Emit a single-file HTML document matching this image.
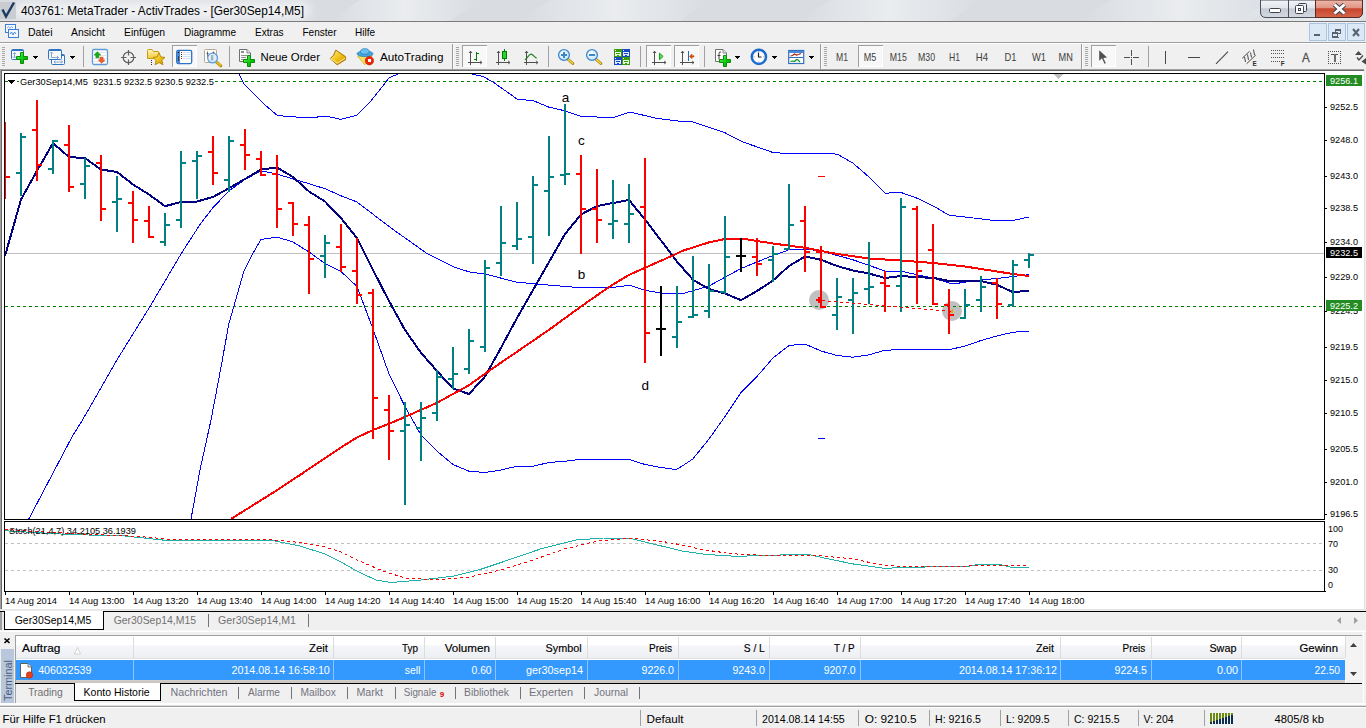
<!DOCTYPE html>
<html lang="de"><head><meta charset="utf-8"><title>403761: MetaTrader - ActivTrades - [Ger30Sep14,M5]</title>
<style>
html,body{margin:0;padding:0;background:#f0f0f0;overflow:hidden}
svg{display:block;font-family:"Liberation Sans",sans-serif}
.c{shape-rendering:crispEdges}
</style></head><body>
<svg width="1366" height="728" viewBox="0 0 1366 728">
<defs><linearGradient id="gt" x1="0" y1="0" x2="1" y2="0"><stop offset="0" stop-color="#dfe6ee"/><stop offset="0.35" stop-color="#e9eef3"/><stop offset="0.7" stop-color="#dde4ec"/><stop offset="1" stop-color="#e4eaf0"/></linearGradient><linearGradient id="gb" x1="0" y1="0" x2="0" y2="1"><stop offset="0" stop-color="#f2f4f7"/><stop offset="0.45" stop-color="#e1e5ea"/><stop offset="0.5" stop-color="#c5cbd4"/><stop offset="1" stop-color="#d4d9e0"/></linearGradient><linearGradient id="gx" x1="0" y1="0" x2="0" y2="1"><stop offset="0" stop-color="#efb8ab"/><stop offset="0.45" stop-color="#e09584"/><stop offset="0.5" stop-color="#c8452c"/><stop offset="1" stop-color="#d4664a"/></linearGradient><linearGradient id="gh" x1="0" y1="0" x2="0" y2="1"><stop offset="0" stop-color="#ffffff"/><stop offset="0.4" stop-color="#ffffff"/><stop offset="0.45" stop-color="#f5f6f9"/><stop offset="1" stop-color="#eeeff3"/></linearGradient></defs>
<g class="c">
<rect x="0" y="0" width="1366" height="21" fill="#d9dde2"/>
</g>
<defs><filter id="bl" x="-10%" y="-100%" width="120%" height="300%"><feGaussianBlur stdDeviation="5"/></filter><linearGradient id="stk" x1="0" y1="0" x2="1" y2="0"><stop offset="0" stop-color="#fff" stop-opacity="0"/><stop offset="0.5" stop-color="#fff" stop-opacity="0.45"/><stop offset="1" stop-color="#fff" stop-opacity="0"/></linearGradient><clipPath id="ct"><rect x="0" y="0" width="1366" height="21"/></clipPath></defs>
<g clip-path="url(#ct)">
<polygon points="360,0 480,0 450,21 330,21" fill="url(#stk)"/>
<polygon points="550,0 710,0 680,21 520,21" fill="url(#stk)"/>
<polygon points="830,0 980,0 950,21 800,21" fill="url(#stk)"/>
<polygon points="1110,0 1280,0 1250,21 1080,21" fill="url(#stk)"/>
<polygon points="1270,0 1390,0 1360,21 1240,21" fill="url(#stk)"/>
<rect x="14" y="2" width="296" height="17" rx="8" fill="#fff" opacity="0.6" filter="url(#bl)"/>
</g>
<g class="c">
<rect x="0" y="21" width="1366" height="1" fill="#7b7b7b"/>
<rect x="0" y="22" width="1366" height="20" fill="#f0f0f0"/>
<rect x="0" y="42" width="1366" height="1" fill="#a0a0a0"/>
<rect x="0" y="43" width="1366" height="1" fill="#ffffff"/>
<rect x="0" y="44" width="1366" height="25" fill="#f0f0f0"/>
</g>
<rect x="0" y="2" width="16" height="17" fill="#c9ccd1"/>
<path d="M2.5 9.5 L6 16.5 L14 2.5" fill="none" stroke="#1b3a63" stroke-width="2.4"/>
<text x="21.0" y="14.7" font-size="12.6" fill="#000" textLength="283.0" lengthAdjust="spacingAndGlyphs">403761: MetaTrader - ActivTrades - [Ger30Sep14,M5]</text>
<path d="M1260.5 0 V12 Q1260.5 17.5 1266 17.5 H1357 Q1362.5 17.5 1362.5 12 V0 Z" fill="url(#gb)" stroke="#4a4f58" stroke-width="1"/>
<path d="M1315.5 0 V17.5 H1357 Q1362.5 17.5 1362.5 12 V0 Z" fill="url(#gx)" stroke="#5a2a22" stroke-width="1"/>
<line x1="1288.5" y1="0" x2="1288.5" y2="17.5" stroke="#4a4f58" stroke-width="1"/>
<rect x="1269.5" y="8.5" width="11" height="4" rx="1" fill="#fff" stroke="#3d4450" stroke-width="1"/>
<rect x="1298.5" y="3.5" width="8" height="8" rx="1" fill="#e9ecf0" stroke="#3d4450" stroke-width="1"/>
<rect x="1295.5" y="5.5" width="8" height="8" rx="1" fill="#fff" stroke="#3d4450" stroke-width="1"/>
<rect x="1298.5" y="8.5" width="2" height="2" fill="#fff" stroke="#3d4450" stroke-width="1"/>
<path d="M1334.5 4.5 L1344.5 13.5 M1344.5 4.5 L1334.5 13.5" stroke="#3d4450" stroke-width="4.8" fill="none"/>
<path d="M1334.5 4.5 L1344.5 13.5 M1344.5 4.5 L1334.5 13.5" stroke="#fff" stroke-width="2.9" fill="none"/>
<g class="c" fill="#f4f8ff" stroke="#3d7fd6" stroke-width="1"><rect x="5.5" y="24.5" width="10" height="8"/><rect x="8.5" y="29.5" width="10" height="8"/></g>
<path d="M10 34 l1.5 -2 l1.5 3 l1.5 -3 l1.5 2" fill="none" stroke="#3d7fd6" stroke-width="0.9"/>
<path d="M7 28 l1.5 -1.500 l1.500 2 l1.500 -2 l1.500 1.500" fill="none" stroke="#6a9fe0" stroke-width="0.8"/>
<text x="28.0" y="36.0" font-size="11.6" fill="#000" textLength="24.5" lengthAdjust="spacingAndGlyphs">Datei</text>
<text x="71.0" y="36.0" font-size="11.6" fill="#000" textLength="34.0" lengthAdjust="spacingAndGlyphs">Ansicht</text>
<text x="124.0" y="36.0" font-size="11.6" fill="#000" textLength="41.0" lengthAdjust="spacingAndGlyphs">Einfügen</text>
<text x="184.0" y="36.0" font-size="11.6" fill="#000" textLength="52.0" lengthAdjust="spacingAndGlyphs">Diagramme</text>
<text x="255.0" y="36.0" font-size="11.6" fill="#000" textLength="28.5" lengthAdjust="spacingAndGlyphs">Extras</text>
<text x="302.5" y="36.0" font-size="11.6" fill="#000" textLength="34.0" lengthAdjust="spacingAndGlyphs">Fenster</text>
<text x="355.0" y="36.0" font-size="11.6" fill="#000" textLength="20.0" lengthAdjust="spacingAndGlyphs">Hilfe</text>
<rect class="c" x="1309.5" y="23.5" width="17" height="17" fill="#dbe8f6" stroke="#a9c3e2" stroke-width="1"/>
<rect class="c" x="1328.5" y="23.5" width="17" height="17" fill="#dbe8f6" stroke="#a9c3e2" stroke-width="1"/>
<rect class="c" x="1347.5" y="23.5" width="17" height="17" fill="#dbe8f6" stroke="#a9c3e2" stroke-width="1"/>
<g class="c">
<rect x="1314" y="34" width="6" height="2" fill="#5a6270"/>
<rect x="1335.5" y="29.5" width="5" height="4" fill="none" stroke="#5a6270" stroke-width="1"/>
<rect x="1335" y="29" width="6" height="2" fill="#5a6270"/>
<path d="M1333.5 32.5 h-1 v5 h6 v-1" fill="none" stroke="#5a6270"/>
<rect x="1332" y="32" width="4" height="1" fill="#5a6270"/>
</g>
<rect class="c" x="1332.500" y="32.500" width="5" height="4" fill="#dbe8f6" stroke="#5a6270" stroke-width="1"/>
<rect x="1332" y="32" width="6" height="2" fill="#5a6270" class="c"/>
<path d="M1353 29 L1359 36 M1359 29 L1353 36" stroke="#5a6270" stroke-width="2" fill="none"/>
<g class="c">
<rect x="2" y="47" width="3" height="1" fill="#a8a8a8"/>
<rect x="2" y="49" width="3" height="1" fill="#a8a8a8"/>
<rect x="2" y="51" width="3" height="1" fill="#a8a8a8"/>
<rect x="2" y="53" width="3" height="1" fill="#a8a8a8"/>
<rect x="2" y="55" width="3" height="1" fill="#a8a8a8"/>
<rect x="2" y="57" width="3" height="1" fill="#a8a8a8"/>
<rect x="2" y="59" width="3" height="1" fill="#a8a8a8"/>
<rect x="2" y="61" width="3" height="1" fill="#a8a8a8"/>
<rect x="2" y="63" width="3" height="1" fill="#a8a8a8"/>
<rect x="2" y="65" width="3" height="1" fill="#a8a8a8"/>
</g>
<g class="c">
<rect x="456" y="47" width="3" height="1" fill="#a8a8a8"/>
<rect x="456" y="49" width="3" height="1" fill="#a8a8a8"/>
<rect x="456" y="51" width="3" height="1" fill="#a8a8a8"/>
<rect x="456" y="53" width="3" height="1" fill="#a8a8a8"/>
<rect x="456" y="55" width="3" height="1" fill="#a8a8a8"/>
<rect x="456" y="57" width="3" height="1" fill="#a8a8a8"/>
<rect x="456" y="59" width="3" height="1" fill="#a8a8a8"/>
<rect x="456" y="61" width="3" height="1" fill="#a8a8a8"/>
<rect x="456" y="63" width="3" height="1" fill="#a8a8a8"/>
<rect x="456" y="65" width="3" height="1" fill="#a8a8a8"/>
</g>
<g class="c">
<rect x="824" y="47" width="3" height="1" fill="#a8a8a8"/>
<rect x="824" y="49" width="3" height="1" fill="#a8a8a8"/>
<rect x="824" y="51" width="3" height="1" fill="#a8a8a8"/>
<rect x="824" y="53" width="3" height="1" fill="#a8a8a8"/>
<rect x="824" y="55" width="3" height="1" fill="#a8a8a8"/>
<rect x="824" y="57" width="3" height="1" fill="#a8a8a8"/>
<rect x="824" y="59" width="3" height="1" fill="#a8a8a8"/>
<rect x="824" y="61" width="3" height="1" fill="#a8a8a8"/>
<rect x="824" y="63" width="3" height="1" fill="#a8a8a8"/>
<rect x="824" y="65" width="3" height="1" fill="#a8a8a8"/>
</g>
<g class="c">
<rect x="1085" y="47" width="3" height="1" fill="#a8a8a8"/>
<rect x="1085" y="49" width="3" height="1" fill="#a8a8a8"/>
<rect x="1085" y="51" width="3" height="1" fill="#a8a8a8"/>
<rect x="1085" y="53" width="3" height="1" fill="#a8a8a8"/>
<rect x="1085" y="55" width="3" height="1" fill="#a8a8a8"/>
<rect x="1085" y="57" width="3" height="1" fill="#a8a8a8"/>
<rect x="1085" y="59" width="3" height="1" fill="#a8a8a8"/>
<rect x="1085" y="61" width="3" height="1" fill="#a8a8a8"/>
<rect x="1085" y="63" width="3" height="1" fill="#a8a8a8"/>
<rect x="1085" y="65" width="3" height="1" fill="#a8a8a8"/>
</g>
<rect x="83" y="46" width="1" height="21" fill="#a0a0a0" class="c"/>
<rect x="229" y="46" width="1" height="21" fill="#a0a0a0" class="c"/>
<rect x="548" y="46" width="1" height="21" fill="#a0a0a0" class="c"/>
<rect x="640" y="46" width="1" height="21" fill="#a0a0a0" class="c"/>
<rect x="704" y="46" width="1" height="21" fill="#a0a0a0" class="c"/>
<rect x="1148" y="46" width="1" height="21" fill="#a0a0a0" class="c"/>
<rect x="452" y="44" width="1" height="25" fill="#9a9a9a" class="c"/>
<rect x="453" y="44" width="1" height="25" fill="#fafafa" class="c"/>
<rect x="820" y="44" width="1" height="25" fill="#9a9a9a" class="c"/>
<rect x="821" y="44" width="1" height="25" fill="#fafafa" class="c"/>
<rect x="1081" y="44" width="1" height="25" fill="#9a9a9a" class="c"/>
<rect x="1082" y="44" width="1" height="25" fill="#fafafa" class="c"/>
<polygon class="c" points="33,56 38,56 35.5,59" fill="#000"/>
<polygon class="c" points="70,56 75,56 72.5,59" fill="#000"/>
<polygon class="c" points="735,56 740,56 737.5,59" fill="#000"/>
<polygon class="c" points="772,56 777,56 774.5,59" fill="#000"/>
<polygon class="c" points="809,56 814,56 811.5,59" fill="#000"/>
<g class="c">
<rect x="172" y="45" width="25" height="22" fill="#f8f8f8"/>
<rect x="172" y="45" width="25" height="1" fill="#a0a0a0"/>
<rect x="172" y="45" width="1" height="22" fill="#a0a0a0"/>
<rect x="196" y="46" width="1" height="21" fill="#ffffff"/>
<rect x="173" y="66" width="24" height="1" fill="#ffffff"/>
</g>
<g class="c">
<rect x="462" y="45" width="25" height="22" fill="#f8f8f8"/>
<rect x="462" y="45" width="25" height="1" fill="#a0a0a0"/>
<rect x="462" y="45" width="1" height="22" fill="#a0a0a0"/>
<rect x="486" y="46" width="1" height="21" fill="#ffffff"/>
<rect x="463" y="66" width="24" height="1" fill="#ffffff"/>
</g>
<g class="c">
<rect x="646" y="45" width="25" height="22" fill="#f8f8f8"/>
<rect x="646" y="45" width="25" height="1" fill="#a0a0a0"/>
<rect x="646" y="45" width="1" height="22" fill="#a0a0a0"/>
<rect x="670" y="46" width="1" height="21" fill="#ffffff"/>
<rect x="647" y="66" width="24" height="1" fill="#ffffff"/>
</g>
<g class="c">
<rect x="674" y="45" width="25" height="22" fill="#f8f8f8"/>
<rect x="674" y="45" width="25" height="1" fill="#a0a0a0"/>
<rect x="674" y="45" width="1" height="22" fill="#a0a0a0"/>
<rect x="698" y="46" width="1" height="21" fill="#ffffff"/>
<rect x="675" y="66" width="24" height="1" fill="#ffffff"/>
</g>
<g class="c">
<rect x="858" y="45" width="25" height="22" fill="#f8f8f8"/>
<rect x="858" y="45" width="25" height="1" fill="#a0a0a0"/>
<rect x="858" y="45" width="1" height="22" fill="#a0a0a0"/>
<rect x="882" y="46" width="1" height="21" fill="#ffffff"/>
<rect x="859" y="66" width="24" height="1" fill="#ffffff"/>
</g>
<g class="c">
<rect x="1091" y="45" width="25" height="22" fill="#f8f8f8"/>
<rect x="1091" y="45" width="25" height="1" fill="#a0a0a0"/>
<rect x="1091" y="45" width="1" height="22" fill="#a0a0a0"/>
<rect x="1115" y="46" width="1" height="21" fill="#ffffff"/>
<rect x="1092" y="66" width="24" height="1" fill="#ffffff"/>
</g>
<defs><linearGradient id="gpl" x1="0" y1="0" x2="1" y2="1"><stop offset="0" stop-color="#7dff7d"/><stop offset="0.5" stop-color="#10d010"/><stop offset="1" stop-color="#009a00"/></linearGradient><linearGradient id="ggold" x1="0" y1="0" x2="1" y2="1"><stop offset="0" stop-color="#fff0a0"/><stop offset="0.5" stop-color="#f0c418"/><stop offset="1" stop-color="#c89000"/></linearGradient><linearGradient id="gfold" x1="0" y1="0" x2="0" y2="1"><stop offset="0" stop-color="#fff6c0"/><stop offset="1" stop-color="#f0c830"/></linearGradient><radialGradient id="glens" cx="0.4" cy="0.35" r="0.7"><stop offset="0" stop-color="#ffffff"/><stop offset="1" stop-color="#c4e0f6"/></radialGradient></defs>
<rect x="11.5" y="49.5" width="12" height="10" rx="1" fill="#f6faff" stroke="#2f74c0" stroke-width="1"/>
<rect class="c" x="12" y="50" width="11" height="1" fill="#2f74c0"/>
<path d="M14.500 52.500 v5.500 M13 54 l1.500 -1.500 l1.500 1.500 M13 56.500 l1.500 1.500 l1.500 -1.500" fill="none" stroke="#7f9cc0" stroke-width="0.9"/>
<path d="M20.5 52.5 h3 v4 h4 v3 h-4 v4 h-3 v-4 h-4 v-3 h4 z" fill="url(#gpl)" stroke="#0a8c0a" stroke-width="1"/>
<rect x="51.5" y="54.5" width="13" height="10" rx="1" fill="#f6faff" stroke="#2f74c0" stroke-width="1"/>
<rect class="c" x="52" y="55" width="12" height="1" fill="#2f74c0"/>
<rect x="48.5" y="49.5" width="13" height="10" rx="1" fill="#f6faff" stroke="#2f74c0" stroke-width="1"/>
<rect class="c" x="49" y="50" width="12" height="1" fill="#2f74c0"/>
<path d="M51.500 52 v5.500 h7 M50 53.500 l1.500 -1.500 l1.500 1.500 M57 56 l1.500 1.500 l-1.500 1.500 M54 62 h8.500 M55.500 60.500 l-1.500 1.500 l1.500 1.500 M61 60.500 l1.500 1.500 l-1.500 1.500" fill="none" stroke="#7f9cc0" stroke-width="0.9"/>
<rect x="92.500" y="49.500" width="15" height="15" rx="1.500" fill="#ffffff" stroke="#5b9bd8" stroke-width="1.3"/>
<g class="c" fill="#e4e4e4"><rect x="94" y="52" width="12" height="1"/><rect x="94" y="55" width="12" height="1"/><rect x="94" y="58" width="12" height="1"/><rect x="94" y="61" width="12" height="1"/></g>
<path d="M97.400 51.800 l3.300 3.200 h-1.800 v2.800 h-3 v-2.800 h-1.800 z" fill="#18b018" stroke="#0a8a0a" stroke-width="0.6"/>
<path d="M101.600 63.200 l3.300 -3.200 h-1.800 v-2.800 h-3 v2.800 h-1.800 z" fill="#f06030" stroke="#d04010" stroke-width="0.6"/>
<g fill="none" stroke="#606060" stroke-width="1.2"><circle cx="128.500" cy="57.500" r="5.300"/><path d="M121 57.500 h5.500 M130.500 57.500 h5.500 M128.500 50 v5.500 M128.500 59.500 v5.500"/></g>
<path d="M147.500 58.500 v-8 q0 -1 1 -1 h3.500 l1.500 2 h4.500 q0.800 0 0.800 1 v6 z" fill="url(#gfold)" stroke="#c89a10" stroke-width="1"/>
<polygon points="159,52.800 160.900,57 165,57.400 161.900,60.300 162.900,64.800 159,62.500 155.100,64.800 156.100,60.300 153,57.400 157.100,57" fill="url(#ggold)" stroke="#b88000" stroke-width="0.9"/>
<g class="c" fill="#303030"><rect x="151" y="60" width="1" height="1"/><rect x="151" y="62" width="1" height="1"/><rect x="151" y="64" width="1" height="1"/></g>
<rect x="176.700" y="50.400" width="15" height="13.200" rx="1.500" fill="#ffffff" stroke="#2f74c0" stroke-width="1.300"/>
<g class="c">
<rect x="177" y="51" width="3" height="12" fill="#4a8ad4"/>
<rect x="178" y="56" width="1" height="5" fill="#404040"/>
<rect x="178" y="52" width="1" height="1" fill="#000"/>
<rect x="181" y="52" width="1" height="1" fill="#ff0000"/>
<rect x="183" y="52" width="8" height="1" fill="#d4e2f8"/>
<rect x="181" y="54" width="1" height="1" fill="#204020"/>
<rect x="183" y="54" width="8" height="1" fill="#d4e2f8"/>
<rect x="181" y="56" width="1" height="1" fill="#204020"/>
<rect x="183" y="56" width="8" height="1" fill="#d4e2f8"/>
<rect x="181" y="58" width="1" height="1" fill="#ff0000"/>
<rect x="183" y="58" width="8" height="1" fill="#d4e2f8"/>
</g>
<rect x="204.500" y="49.500" width="12" height="13" rx="1" fill="#fdfdfd" stroke="#b4a890" stroke-width="1"/>
<path d="M207.500 51.500 v6 M206.500 53.500 h2 M213.500 51.500 v4 M212.500 52.500 h2" stroke="#606060" stroke-width="0.9" fill="none"/>
<line x1="216.800" y1="62.300" x2="220.800" y2="65.800" stroke="#b88a00" stroke-width="3" stroke-linecap="round"/>
<line x1="216.800" y1="62.300" x2="220.500" y2="65.400" stroke="#e8c830" stroke-width="1.400" stroke-linecap="round"/>
<circle cx="212.600" cy="58" r="4.900" fill="url(#glens)" fill-opacity="0.92" stroke="#5b9be0" stroke-width="1.200"/>
<rect x="210.800" y="55" width="2.600" height="5.500" fill="#8aa0b4" opacity="0.8"/>
<path d="M239.5 49.5 h7.5 l3.500 3.500 v8.5 h-11 z" fill="#fdfdfd" stroke="#707070" stroke-width="1" stroke-linejoin="round"/>
<path d="M247 49.5 v3.500 h3.500" fill="#e8e8e8" stroke="#707070" stroke-width="0.8"/>
<g class="c" fill="#909090"><rect x="241" y="51" width="3" height="2"/><rect x="241" y="55" width="6" height="1"/><rect x="241" y="57" width="5" height="1"/><rect x="241" y="59" width="3" height="1"/></g>
<path d="M247.5 55.5 h3 v4 h4 v3 h-4 v4 h-3 v-4 h-4 v-3 h4 z" fill="url(#gpl)" stroke="#0a8c0a" stroke-width="1"/>
<polygon points="335.800,50.100 345.400,56.600 345.700,59.500 337.200,64.800 330.200,58.600 333.700,55.100" fill="url(#ggold)" stroke="#a87000" stroke-width="1" stroke-linejoin="round"/>
<path d="M330.600 58.800 l6.700 4.300 l8 -5" fill="none" stroke="#fff4c0" stroke-width="0.8"/>
<polygon points="357.500,56 372.400,55.700 364.800,64.800" fill="#f8e060" stroke="#d8b020" stroke-width="0.8"/>
<ellipse cx="365" cy="53.800" rx="8" ry="2.800" fill="#48a4dc" stroke="#2a84c0" stroke-width="0.8"/>
<ellipse cx="364.800" cy="51.500" rx="4.300" ry="2.800" fill="#6cc0f0" stroke="#2a84c0" stroke-width="0.8"/>
<circle cx="369.400" cy="60.700" r="4.200" fill="#e82808" stroke="#c01800" stroke-width="0.6"/>
<rect x="368" y="59" width="3" height="3" fill="#ffffff" class="c"/>
<g class="c" fill="#505050"><rect x="470" y="51" width="1" height="14"/><rect x="468" y="62" width="14" height="1"/></g>
<path d="M469 53 l1.500 -1.800 l1.500 1.800 M480.2 61 l1.800 1.500 l-1.800 1.500" fill="none" stroke="#505050" stroke-width="1"/>
<g class="c" fill="#008000"><rect x="476" y="52" width="1" height="9"/><rect x="477" y="53" width="2" height="1"/><rect x="474" y="59" width="2" height="1"/></g>
<g class="c" fill="#505050"><rect x="498" y="51" width="1" height="14"/><rect x="496" y="62" width="14" height="1"/></g>
<path d="M497 53 l1.500 -1.800 l1.500 1.800 M508.2 61 l1.800 1.500 l-1.800 1.500" fill="none" stroke="#505050" stroke-width="1"/>
<g class="c">
<rect x="504" y="49" width="1" height="12" fill="#008000"/>
</g>
<rect x="502.500" y="51.500" width="4" height="7" fill="#30d030" stroke="#008000" stroke-width="1"/>
<g class="c" fill="#505050"><rect x="526" y="51" width="1" height="14"/><rect x="524" y="62" width="14" height="1"/></g>
<path d="M525 53 l1.500 -1.800 l1.500 1.800 M536.2 61 l1.800 1.500 l-1.800 1.500" fill="none" stroke="#505050" stroke-width="1"/>
<path d="M525 59.700 C527.500 58 529 54.200 531 54.200 C533 54.200 534.500 57.500 536.700 58.300" fill="none" stroke="#208020" stroke-width="1.200"/>
<line x1="567.7" y1="59" x2="572.8" y2="63.500" stroke="#b08400" stroke-width="3" stroke-linecap="round"/>
<line x1="567.7" y1="59" x2="572.5" y2="63.200" stroke="#f0d850" stroke-width="1.400" stroke-linecap="round"/>
<circle cx="564" cy="55" r="5.400" fill="url(#glens)" stroke="#3a88d0" stroke-width="1.300"/>
<rect class="c" x="561" y="54" width="6" height="2" fill="#3a88c8"/>
<rect class="c" x="563" y="52" width="2" height="6" fill="#3a88c8"/>
<line x1="595.7" y1="59" x2="600.8" y2="63.500" stroke="#b08400" stroke-width="3" stroke-linecap="round"/>
<line x1="595.7" y1="59" x2="600.5" y2="63.200" stroke="#f0d850" stroke-width="1.400" stroke-linecap="round"/>
<circle cx="592" cy="55" r="5.400" fill="url(#glens)" stroke="#3a88d0" stroke-width="1.300"/>
<rect class="c" x="589" y="54" width="6" height="2" fill="#3a88c8"/>
<g class="c">
<rect x="614" y="49" width="8" height="8" fill="#3a9a10"/>
<rect x="615" y="52" width="6" height="4" fill="#e8ffe0"/>
<rect x="616" y="53" width="4" height="1" fill="#3a9a10"/>
<rect x="615" y="50" width="1" height="1" fill="#ffffff"/>
<rect x="617" y="55" width="2" height="1" fill="#3a9a10"/>
<rect x="622" y="49" width="8" height="8" fill="#1848c0"/>
<rect x="623" y="52" width="6" height="4" fill="#e0e8ff"/>
<rect x="624" y="53" width="4" height="1" fill="#1848c0"/>
<rect x="623" y="50" width="1" height="1" fill="#ffffff"/>
<rect x="625" y="55" width="2" height="1" fill="#1848c0"/>
<rect x="614" y="57" width="8" height="8" fill="#1848c0"/>
<rect x="615" y="60" width="6" height="4" fill="#e0e8ff"/>
<rect x="616" y="61" width="4" height="1" fill="#1848c0"/>
<rect x="615" y="58" width="1" height="1" fill="#ffffff"/>
<rect x="617" y="63" width="2" height="1" fill="#1848c0"/>
<rect x="622" y="57" width="8" height="8" fill="#3a9a10"/>
<rect x="623" y="60" width="6" height="4" fill="#e8ffe0"/>
<rect x="624" y="61" width="4" height="1" fill="#3a9a10"/>
<rect x="623" y="58" width="1" height="1" fill="#ffffff"/>
<rect x="625" y="63" width="2" height="1" fill="#3a9a10"/>
</g>
<g class="c" fill="#505050"><rect x="654" y="51" width="1" height="14"/><rect x="652" y="62" width="14" height="1"/></g>
<path d="M653 53 l1.500 -1.800 l1.500 1.800 M664.2 61 l1.800 1.500 l-1.800 1.500" fill="none" stroke="#505050" stroke-width="1"/>
<polygon points="659.500,53.200 659.500,59.700 663.100,56.400" fill="#60e060" stroke="#10a010" stroke-width="1"/>
<g class="c" fill="#505050"><rect x="682" y="51" width="1" height="14"/><rect x="680" y="62" width="14" height="1"/></g>
<path d="M681 53 l1.500 -1.800 l1.500 1.800 M692.2 61 l1.800 1.500 l-1.800 1.500" fill="none" stroke="#505050" stroke-width="1"/>
<rect x="688" y="51" width="1" height="10" fill="#1a6fb0" class="c"/>
<path d="M689.400 56.400 l2.600 -2.400 v1.800 h2 v1.200 h-2 v1.800 z" fill="#e05010" stroke="#c03000" stroke-width="0.5"/>
<path d="M715.5 49.5 h7.5 l3.500 3.500 v8.5 h-11 z" fill="#fdfdfd" stroke="#707070" stroke-width="1" stroke-linejoin="round"/>
<path d="M723 49.5 v3.500 h3.500" fill="#e8e8e8" stroke="#707070" stroke-width="0.8"/>
<path d="M721 52 q-2 -0.500 -2 1.500 v6 M717.500 55.500 h3" fill="none" stroke="#404040" stroke-width="1"/>
<path d="M723.5 55.5 h3 v4 h4 v3 h-4 v4 h-3 v-4 h-4 v-3 h4 z" fill="url(#gpl)" stroke="#0a8c0a" stroke-width="1"/>
<circle cx="758.900" cy="56.800" r="7" fill="#ffffff" stroke="#1a6fd8" stroke-width="2.200"/>
<circle cx="758.900" cy="56.800" r="8" fill="none" stroke="#0a4aa8" stroke-width="0.5"/>
<path d="M758.500 52.500 v4.500 h3" fill="none" stroke="#202020" stroke-width="1.200"/>
<g fill="#909090"><rect x="758.400" y="51" width="1" height="1"/><rect x="758.400" y="61.500" width="1" height="1"/><rect x="753.500" y="56.300" width="1" height="1"/><rect x="763.400" y="56.300" width="1" height="1"/></g>
<rect x="788.700" y="50.500" width="15" height="13" fill="#ffffff" stroke="#3070c0" stroke-width="1.200"/>
<g class="c">
<rect x="789" y="51" width="14" height="2" fill="#4a8ad8"/>
<rect x="789" y="57" width="14" height="1" fill="#3070c0"/>
</g>
<path d="M790.500 56 l2 -0.500 l2 -1.500 l2 1 l2 -0.500 l2.500 -1" fill="none" stroke="#a02010" stroke-width="1.200"/>
<path d="M790.500 61.500 l2 -0.500 l2 0.500 l2 -2 l1.500 0.500 l2 2" fill="none" stroke="#109020" stroke-width="1.200"/>
<polygon points="1099.200,50.200 1099.200,60.800 1102,58.300 1104.500,63.800 1105.800,63.200 1103.400,57.900 1107.100,57.500" fill="#505050"/>
<g class="c" fill="#505050"><rect x="1124" y="57" width="6" height="1"/><rect x="1133" y="57" width="6" height="1"/><rect x="1131" y="50" width="1" height="6"/><rect x="1131" y="59" width="1" height="6"/><rect x="1131" y="57" width="1" height="1"/></g>
<g class="c" fill="#484848"><rect x="1165" y="51" width="1" height="13"/><rect x="1188" y="57" width="12" height="1"/></g>
<line x1="1216" y1="63.800" x2="1228" y2="51.700" stroke="#484848" stroke-width="1.100"/>
<g stroke="#484848" stroke-width="1" fill="none"><line x1="1242.200" y1="58.300" x2="1249.500" y2="51.300"/><line x1="1246.600" y1="63.800" x2="1255.800" y2="55"/><path d="M1244.500 57 l1 5 M1247.500 54.500 l1 5.500 M1250.500 52.500 l1 5 M1253.500 49.500 l1 5.500"/></g>
<text x="1252.6" y="65.6" font-size="6.3" fill="#303030" font-weight="bold">E</text>
<g class="c" fill="#505050">
<rect x="1271" y="50" width="1" height="1"/>
<rect x="1273" y="50" width="1" height="1"/>
<rect x="1275" y="50" width="1" height="1"/>
<rect x="1277" y="50" width="1" height="1"/>
<rect x="1279" y="50" width="1" height="1"/>
<rect x="1281" y="50" width="1" height="1"/>
<rect x="1283" y="50" width="1" height="1"/>
<rect x="1271" y="53" width="1" height="1"/>
<rect x="1273" y="53" width="1" height="1"/>
<rect x="1275" y="53" width="1" height="1"/>
<rect x="1277" y="53" width="1" height="1"/>
<rect x="1279" y="53" width="1" height="1"/>
<rect x="1281" y="53" width="1" height="1"/>
<rect x="1283" y="53" width="1" height="1"/>
<rect x="1271" y="57" width="1" height="1"/>
<rect x="1273" y="57" width="1" height="1"/>
<rect x="1275" y="57" width="1" height="1"/>
<rect x="1277" y="57" width="1" height="1"/>
<rect x="1279" y="57" width="1" height="1"/>
<rect x="1281" y="57" width="1" height="1"/>
<rect x="1283" y="57" width="1" height="1"/>
<rect x="1271" y="61" width="1" height="1"/>
<rect x="1273" y="61" width="1" height="1"/>
<rect x="1275" y="61" width="1" height="1"/>
<rect x="1277" y="61" width="1" height="1"/>
<rect x="1279" y="61" width="1" height="1"/>
</g>
<text x="1280.8" y="65.6" font-size="6.3" fill="#303030" font-weight="bold">F</text>
<text x="1301.9" y="61.9" font-size="12.4" fill="#505050" textLength="7.7" lengthAdjust="spacingAndGlyphs" stroke="#505050" stroke-width="0.3">A</text>
<g class="c" fill="#505050">
<rect x="1328" y="51" width="1" height="1"/><rect x="1328" y="63" width="1" height="1"/>
<rect x="1330" y="51" width="1" height="1"/><rect x="1330" y="63" width="1" height="1"/>
<rect x="1332" y="51" width="1" height="1"/><rect x="1332" y="63" width="1" height="1"/>
<rect x="1334" y="51" width="1" height="1"/><rect x="1334" y="63" width="1" height="1"/>
<rect x="1336" y="51" width="1" height="1"/><rect x="1336" y="63" width="1" height="1"/>
<rect x="1338" y="51" width="1" height="1"/><rect x="1338" y="63" width="1" height="1"/>
<rect x="1340" y="51" width="1" height="1"/><rect x="1340" y="63" width="1" height="1"/>
<rect x="1328" y="51" width="1" height="1"/><rect x="1340" y="51" width="1" height="1"/>
<rect x="1328" y="53" width="1" height="1"/><rect x="1340" y="53" width="1" height="1"/>
<rect x="1328" y="55" width="1" height="1"/><rect x="1340" y="55" width="1" height="1"/>
<rect x="1328" y="57" width="1" height="1"/><rect x="1340" y="57" width="1" height="1"/>
<rect x="1328" y="59" width="1" height="1"/><rect x="1340" y="59" width="1" height="1"/>
<rect x="1328" y="61" width="1" height="1"/><rect x="1340" y="61" width="1" height="1"/>
<rect x="1328" y="63" width="1" height="1"/><rect x="1340" y="63" width="1" height="1"/>
<rect x="1331" y="54" width="7" height="1" fill="#505050"/>
<rect x="1334" y="54" width="1" height="8" fill="#505050"/>
<rect x="1334" y="54" width="2" height="8" fill="#6a6a6a"/>
</g>
<polygon points="1355,55 1358.500,51 1362,55" fill="#484848"/><path d="M1357 57.500 l2 2.500 l4 -4.500" fill="none" stroke="#484848" stroke-width="1.300"/><polygon points="1361.500,61.500 1366,58 1366,64.500" fill="#484848"/>
<text x="260.4" y="61.0" font-size="11.3" fill="#000" textLength="59.6" lengthAdjust="spacingAndGlyphs">Neue Order</text>
<text x="380.0" y="61.0" font-size="11.3" fill="#000" textLength="63.4" lengthAdjust="spacingAndGlyphs">AutoTrading</text>
<text x="836.0" y="61.0" font-size="10.5" fill="#404040" textLength="12.0" lengthAdjust="spacingAndGlyphs">M1</text>
<text x="863.8" y="61.0" font-size="10.5" fill="#404040" textLength="12.5" lengthAdjust="spacingAndGlyphs">M5</text>
<text x="889.8" y="61.0" font-size="10.5" fill="#404040" textLength="17.0" lengthAdjust="spacingAndGlyphs">M15</text>
<text x="918.0" y="61.0" font-size="10.5" fill="#404040" textLength="17.0" lengthAdjust="spacingAndGlyphs">M30</text>
<text x="949.0" y="61.0" font-size="10.5" fill="#404040" textLength="11.0" lengthAdjust="spacingAndGlyphs">H1</text>
<text x="975.7" y="61.0" font-size="10.5" fill="#404040" textLength="12.3" lengthAdjust="spacingAndGlyphs">H4</text>
<text x="1004.5" y="61.0" font-size="10.5" fill="#404040" textLength="12.0" lengthAdjust="spacingAndGlyphs">D1</text>
<text x="1032.0" y="61.0" font-size="10.5" fill="#404040" textLength="14.0" lengthAdjust="spacingAndGlyphs">W1</text>
<text x="1058.5" y="61.0" font-size="10.5" fill="#404040" textLength="14.3" lengthAdjust="spacingAndGlyphs">MN</text>
<g class="c">
<rect x="0" y="69" width="1366" height="1" fill="#a0a0a0"/>
<rect x="0" y="70" width="1366" height="1" fill="#696969"/>
<rect x="0" y="71" width="1366" height="540" fill="#ffffff"/>
<rect x="0" y="70" width="1" height="541" fill="#a0a0a0"/>
<rect x="1" y="70" width="1" height="541" fill="#696969"/>
<rect x="1364" y="69" width="1" height="542" fill="#e3e3e3"/>
<rect x="1365" y="69" width="1" height="542" fill="#f0f0f0"/>
<rect x="4.5" y="73.5" width="1320" height="446" fill="none" stroke="#000" stroke-width="1"/>
<rect x="4.5" y="521.5" width="1320" height="70" fill="none" stroke="#000" stroke-width="1"/>
</g>
<defs><clipPath id="cm"><rect x="5" y="74" width="1319" height="445"/></clipPath><clipPath id="cs"><rect x="5" y="522" width="1319" height="69"/></clipPath></defs>
<g clip-path="url(#cm)">
<g class="c">
<rect x="5" y="253" width="1319" height="1" fill="#c0c0c0"/>
</g>
<circle cx="819" cy="300" r="10" fill="#c0c0c0"/>
<circle cx="952" cy="311" r="10" fill="#c0c0c0"/>
<g class="c">
<line x1="5" y1="81.5" x2="1324" y2="81.5" stroke="#008000" stroke-width="1" stroke-dasharray="3 3"/>
<line x1="5" y1="306.5" x2="1324" y2="306.5" stroke="#008000" stroke-width="1" stroke-dasharray="3 3"/>
</g>
<polyline points="238.0,72.0 239.0,74.0 243.8,83.8 264.6,104.6 277.4,115.5 287.3,116.4 302.0,117.4 317.0,117.4 318.0,116.4 327.8,116.4 340.7,119.4 356.5,115.5 370.3,101.6 386.1,81.9 389.0,77.9 398.0,74.0 402.0,72.0" fill="none" stroke="#0000ff" stroke-width="1" class="c"/>
<polyline points="468.0,72.0 472.0,74.0 483.0,76.5 492.8,81.9 517.0,99.0 533.5,100.8 548.5,107.0 565.0,110.8 581.0,116.5 613.5,117.5 629.8,112.0 656.0,118.2 682.0,121.5 693.0,122.0 725.0,132.8 743.0,142.0 773.0,152.5 782.0,153.2 829.5,153.2 838.0,154.5 853.0,163.2 869.0,177.0 885.0,193.2 901.0,192.5 917.0,198.2 933.0,205.8 949.0,215.2 965.0,217.0 992.0,220.2 1014.5,220.2 1029.0,217.0" fill="none" stroke="#0000ff" stroke-width="1" class="c"/>
<polyline points="28.8,519.0 72.5,436.0 82.5,420.0 117.5,359.0 150.0,306.5 181.0,254.0 200.0,224.5 212.5,208.2 229.0,190.8 245.0,179.5 261.0,170.8 277.0,174.0 293.0,179.0 309.0,183.7 325.0,188.7 341.0,195.8 357.0,202.0 391.0,228.0 427.0,253.5 456.0,267.8 469.8,272.0 485.0,274.0 516.0,282.0 536.0,284.0 581.0,287.8 609.8,287.8 629.8,285.2 645.0,290.2 661.0,293.2 682.0,293.8 709.0,286.0 741.0,268.5 773.0,255.5 789.0,249.8 805.0,249.0 821.0,251.0 853.0,259.8 885.0,271.0 901.0,271.0 917.0,274.8 933.0,278.0 949.0,283.0 959.5,283.0 981.0,279.8 997.0,278.5 1013.0,276.5 1029.0,274.7" fill="none" stroke="#0000ff" stroke-width="1" class="c"/>
<polyline points="191.0,519.0 200.0,470.0 211.0,420.0 215.0,399.0 222.5,359.0 228.8,324.0 233.8,306.5 243.8,271.5 252.5,254.0 261.0,239.5 277.0,237.0 293.0,242.0 309.0,252.0 325.0,263.5 341.0,271.5 357.0,286.5 373.0,329.0 389.0,374.0 405.0,406.5 421.0,435.0 437.0,451.2 453.0,464.5 469.0,471.2 485.0,472.5 501.0,470.0 517.0,466.2 533.0,466.2 549.0,462.5 565.0,461.2 581.0,459.2 628.5,459.2 645.0,464.5 661.0,467.5 676.0,469.5 682.0,466.2 693.0,458.8 709.0,439.0 725.0,416.5 741.0,392.5 757.0,376.5 773.0,358.0 789.0,345.5 805.0,344.0 821.0,351.0 837.0,355.5 853.0,357.2 869.0,354.8 885.0,350.2 917.0,349.2 949.0,349.8 965.0,346.0 981.0,340.5 997.0,336.0 1013.0,332.2 1029.0,331.0" fill="none" stroke="#0000ff" stroke-width="1" class="c"/>
<polyline points="5.0,256.0 21.0,199.5 37.0,170.8 53.0,143.2 69.0,157.0 85.0,158.2 101.0,169.5 117.0,172.0 133.0,184.5 149.0,194.5 165.0,206.2 181.0,202.0 197.0,201.5 213.0,197.0 229.0,188.2 245.0,179.0 261.0,169.5 277.0,167.5 293.0,177.0 309.0,191.5 325.0,201.5 341.0,218.2 357.0,238.0 373.0,270.0 389.0,301.0 405.0,330.0 421.0,352.8 437.0,371.0 453.0,388.5 469.0,394.0 485.0,376.5 501.0,347.8 517.0,318.0 533.0,290.0 549.0,262.0 565.0,234.0 581.0,214.5 597.0,206.0 613.0,203.0 629.0,200.0 645.0,219.5 661.0,240.5 677.0,261.6 693.0,279.8 709.0,289.0 725.0,293.5 741.0,300.2 757.0,291.0 773.0,280.5 789.0,266.0 805.0,256.5 821.0,259.8 837.0,266.0 853.0,270.5 869.0,273.5 885.0,278.0 901.0,276.0 917.0,277.2 933.0,277.8 949.0,281.0 965.0,281.5 981.0,281.0 997.0,284.8 1013.0,292.2 1029.0,290.7" fill="none" stroke="#000080" stroke-width="2" class="c" stroke-linejoin="round"/>
<polyline points="231.0,519.0 275.0,491.5 300.0,475.0 341.0,447.5 357.0,437.5 373.0,430.0 389.0,423.8 406.0,416.5 437.0,402.8 469.0,385.2 491.0,369.5 548.5,330.2 581.0,306.5 609.8,286.5 628.5,275.2 645.0,267.8 673.5,255.2 682.0,251.0 709.5,242.2 725.0,239.0 744.5,239.0 773.0,243.5 805.0,247.8 837.0,254.0 869.0,258.5 901.0,260.5 933.0,263.0 965.0,266.5 997.0,271.5 1013.0,274.0 1029.0,276.0" fill="none" stroke="#ff0000" stroke-width="2" class="c" stroke-linejoin="round"/>
<g class="c">
<rect x="4" y="122" width="2" height="77" fill="#ff0000"/>
<rect x="6" y="176" width="4" height="2" fill="#ff0000"/>
<rect x="20" y="133" width="2" height="63" fill="#008080"/>
<rect x="16" y="172" width="4" height="2" fill="#008080"/>
<rect x="22" y="136" width="4" height="2" fill="#008080"/>
<rect x="36" y="100" width="2" height="81" fill="#ff0000"/>
<rect x="32" y="129" width="4" height="2" fill="#ff0000"/>
<rect x="38" y="164" width="4" height="2" fill="#ff0000"/>
<rect x="52" y="140" width="2" height="34" fill="#008080"/>
<rect x="48" y="168" width="4" height="2" fill="#008080"/>
<rect x="54" y="140" width="4" height="2" fill="#008080"/>
<rect x="68" y="125" width="2" height="67" fill="#ff0000"/>
<rect x="64" y="144" width="4" height="2" fill="#ff0000"/>
<rect x="70" y="186" width="4" height="2" fill="#ff0000"/>
<rect x="84" y="158" width="2" height="41" fill="#008080"/>
<rect x="80" y="183" width="4" height="2" fill="#008080"/>
<rect x="86" y="165" width="4" height="2" fill="#008080"/>
<rect x="100" y="155" width="2" height="66" fill="#ff0000"/>
<rect x="96" y="162" width="4" height="2" fill="#ff0000"/>
<rect x="102" y="208" width="4" height="2" fill="#ff0000"/>
<rect x="116" y="176" width="2" height="56" fill="#008080"/>
<rect x="112" y="201" width="4" height="2" fill="#008080"/>
<rect x="118" y="198" width="4" height="2" fill="#008080"/>
<rect x="132" y="191" width="2" height="52" fill="#ff0000"/>
<rect x="128" y="202" width="4" height="2" fill="#ff0000"/>
<rect x="134" y="219" width="4" height="2" fill="#ff0000"/>
<rect x="148" y="206" width="2" height="32" fill="#ff0000"/>
<rect x="144" y="220" width="4" height="2" fill="#ff0000"/>
<rect x="150" y="236" width="4" height="2" fill="#ff0000"/>
<rect x="164" y="213" width="2" height="33" fill="#008080"/>
<rect x="160" y="241" width="4" height="2" fill="#008080"/>
<rect x="166" y="224" width="4" height="2" fill="#008080"/>
<rect x="180" y="151" width="2" height="77" fill="#008080"/>
<rect x="176" y="219" width="4" height="2" fill="#008080"/>
<rect x="182" y="162" width="4" height="2" fill="#008080"/>
<rect x="196" y="151" width="2" height="48" fill="#008080"/>
<rect x="192" y="160" width="4" height="2" fill="#008080"/>
<rect x="198" y="155" width="4" height="2" fill="#008080"/>
<rect x="212" y="136" width="2" height="49" fill="#ff0000"/>
<rect x="208" y="151" width="4" height="2" fill="#ff0000"/>
<rect x="214" y="172" width="4" height="2" fill="#ff0000"/>
<rect x="228" y="136" width="2" height="56" fill="#008080"/>
<rect x="224" y="179" width="4" height="2" fill="#008080"/>
<rect x="230" y="140" width="4" height="2" fill="#008080"/>
<rect x="244" y="129" width="2" height="41" fill="#ff0000"/>
<rect x="240" y="144" width="4" height="2" fill="#ff0000"/>
<rect x="246" y="154" width="4" height="2" fill="#ff0000"/>
<rect x="260" y="151" width="2" height="25" fill="#ff0000"/>
<rect x="256" y="158" width="4" height="2" fill="#ff0000"/>
<rect x="262" y="174" width="4" height="2" fill="#ff0000"/>
<rect x="276" y="155" width="2" height="73" fill="#ff0000"/>
<rect x="272" y="173" width="4" height="2" fill="#ff0000"/>
<rect x="278" y="208" width="4" height="2" fill="#ff0000"/>
<rect x="292" y="202" width="2" height="34" fill="#ff0000"/>
<rect x="288" y="202" width="4" height="2" fill="#ff0000"/>
<rect x="294" y="223" width="4" height="2" fill="#ff0000"/>
<rect x="308" y="216" width="2" height="78" fill="#ff0000"/>
<rect x="304" y="224" width="4" height="2" fill="#ff0000"/>
<rect x="310" y="258" width="4" height="2" fill="#ff0000"/>
<rect x="324" y="235" width="2" height="43" fill="#008080"/>
<rect x="320" y="255" width="4" height="2" fill="#008080"/>
<rect x="326" y="242" width="4" height="2" fill="#008080"/>
<rect x="340" y="224" width="2" height="48" fill="#ff0000"/>
<rect x="336" y="246" width="4" height="2" fill="#ff0000"/>
<rect x="342" y="266" width="4" height="2" fill="#ff0000"/>
<rect x="356" y="238" width="2" height="66" fill="#ff0000"/>
<rect x="352" y="270" width="4" height="2" fill="#ff0000"/>
<rect x="358" y="294" width="4" height="2" fill="#ff0000"/>
<rect x="372" y="289" width="2" height="150" fill="#ff0000"/>
<rect x="368" y="292" width="4" height="2" fill="#ff0000"/>
<rect x="374" y="397" width="4" height="2" fill="#ff0000"/>
<rect x="388" y="395" width="2" height="65" fill="#ff0000"/>
<rect x="384" y="409" width="4" height="2" fill="#ff0000"/>
<rect x="390" y="430" width="4" height="2" fill="#ff0000"/>
<rect x="404" y="402" width="2" height="103" fill="#008080"/>
<rect x="400" y="430" width="4" height="2" fill="#008080"/>
<rect x="406" y="424" width="4" height="2" fill="#008080"/>
<rect x="420" y="402" width="2" height="59" fill="#008080"/>
<rect x="416" y="427" width="4" height="2" fill="#008080"/>
<rect x="422" y="417" width="4" height="2" fill="#008080"/>
<rect x="436" y="370" width="2" height="51" fill="#008080"/>
<rect x="432" y="412" width="4" height="2" fill="#008080"/>
<rect x="438" y="376" width="4" height="2" fill="#008080"/>
<rect x="452" y="347" width="2" height="42" fill="#008080"/>
<rect x="448" y="378" width="4" height="2" fill="#008080"/>
<rect x="454" y="373" width="4" height="2" fill="#008080"/>
<rect x="468" y="329" width="2" height="45" fill="#008080"/>
<rect x="464" y="368" width="4" height="2" fill="#008080"/>
<rect x="470" y="340" width="4" height="2" fill="#008080"/>
<rect x="484" y="260" width="2" height="92" fill="#008080"/>
<rect x="480" y="346" width="4" height="2" fill="#008080"/>
<rect x="486" y="267" width="4" height="2" fill="#008080"/>
<rect x="500" y="206" width="2" height="70" fill="#008080"/>
<rect x="496" y="262" width="4" height="2" fill="#008080"/>
<rect x="502" y="242" width="4" height="2" fill="#008080"/>
<rect x="516" y="202" width="2" height="48" fill="#008080"/>
<rect x="512" y="245" width="4" height="2" fill="#008080"/>
<rect x="518" y="238" width="4" height="2" fill="#008080"/>
<rect x="532" y="176" width="2" height="88" fill="#008080"/>
<rect x="528" y="236" width="4" height="2" fill="#008080"/>
<rect x="534" y="184" width="4" height="2" fill="#008080"/>
<rect x="548" y="136" width="2" height="100" fill="#008080"/>
<rect x="544" y="190" width="4" height="2" fill="#008080"/>
<rect x="550" y="176" width="4" height="2" fill="#008080"/>
<rect x="564" y="104" width="2" height="81" fill="#008080"/>
<rect x="560" y="174" width="4" height="2" fill="#008080"/>
<rect x="566" y="173" width="4" height="2" fill="#008080"/>
<rect x="580" y="155" width="2" height="99" fill="#ff0000"/>
<rect x="576" y="173" width="4" height="2" fill="#ff0000"/>
<rect x="582" y="208" width="4" height="2" fill="#ff0000"/>
<rect x="596" y="169" width="2" height="74" fill="#ff0000"/>
<rect x="592" y="208" width="4" height="2" fill="#ff0000"/>
<rect x="598" y="219" width="4" height="2" fill="#ff0000"/>
<rect x="612" y="180" width="2" height="59" fill="#008080"/>
<rect x="608" y="223" width="4" height="2" fill="#008080"/>
<rect x="614" y="220" width="4" height="2" fill="#008080"/>
<rect x="628" y="184" width="2" height="59" fill="#008080"/>
<rect x="624" y="223" width="4" height="2" fill="#008080"/>
<rect x="630" y="213" width="4" height="2" fill="#008080"/>
<rect x="644" y="158" width="2" height="205" fill="#ff0000"/>
<rect x="640" y="206" width="4" height="2" fill="#ff0000"/>
<rect x="646" y="332" width="4" height="2" fill="#ff0000"/>
<rect x="660" y="286" width="2" height="70" fill="#000000"/>
<rect x="656" y="328" width="4" height="2" fill="#000000"/>
<rect x="662" y="328" width="4" height="2" fill="#000000"/>
<rect x="676" y="286" width="2" height="62" fill="#008080"/>
<rect x="672" y="336" width="4" height="2" fill="#008080"/>
<rect x="678" y="321" width="4" height="2" fill="#008080"/>
<rect x="692" y="256" width="2" height="62" fill="#008080"/>
<rect x="688" y="316" width="4" height="2" fill="#008080"/>
<rect x="694" y="314" width="4" height="2" fill="#008080"/>
<rect x="708" y="264" width="2" height="54" fill="#008080"/>
<rect x="704" y="310" width="4" height="2" fill="#008080"/>
<rect x="710" y="290" width="4" height="2" fill="#008080"/>
<rect x="724" y="216" width="2" height="78" fill="#008080"/>
<rect x="720" y="291" width="4" height="2" fill="#008080"/>
<rect x="726" y="256" width="4" height="2" fill="#008080"/>
<rect x="740" y="238" width="2" height="34" fill="#000000"/>
<rect x="736" y="255" width="4" height="2" fill="#000000"/>
<rect x="742" y="255" width="4" height="2" fill="#000000"/>
<rect x="756" y="238" width="2" height="38" fill="#ff0000"/>
<rect x="752" y="256" width="4" height="2" fill="#ff0000"/>
<rect x="758" y="263" width="4" height="2" fill="#ff0000"/>
<rect x="772" y="246" width="2" height="36" fill="#008080"/>
<rect x="768" y="259" width="4" height="2" fill="#008080"/>
<rect x="774" y="253" width="4" height="2" fill="#008080"/>
<rect x="788" y="184" width="2" height="66" fill="#008080"/>
<rect x="784" y="248" width="4" height="2" fill="#008080"/>
<rect x="790" y="224" width="4" height="2" fill="#008080"/>
<rect x="804" y="206" width="2" height="66" fill="#ff0000"/>
<rect x="800" y="220" width="4" height="2" fill="#ff0000"/>
<rect x="806" y="251" width="4" height="2" fill="#ff0000"/>
<rect x="820" y="246" width="2" height="62" fill="#ff0000"/>
<rect x="816" y="251" width="4" height="2" fill="#ff0000"/>
<rect x="822" y="306" width="4" height="2" fill="#ff0000"/>
<rect x="836" y="278" width="2" height="52" fill="#008080"/>
<rect x="832" y="314" width="4" height="2" fill="#008080"/>
<rect x="838" y="296" width="4" height="2" fill="#008080"/>
<rect x="852" y="278" width="2" height="56" fill="#008080"/>
<rect x="848" y="299" width="4" height="2" fill="#008080"/>
<rect x="854" y="292" width="4" height="2" fill="#008080"/>
<rect x="868" y="242" width="2" height="62" fill="#008080"/>
<rect x="864" y="288" width="4" height="2" fill="#008080"/>
<rect x="870" y="286" width="4" height="2" fill="#008080"/>
<rect x="884" y="271" width="2" height="41" fill="#ff0000"/>
<rect x="880" y="282" width="4" height="2" fill="#ff0000"/>
<rect x="886" y="285" width="4" height="2" fill="#ff0000"/>
<rect x="900" y="198" width="2" height="114" fill="#008080"/>
<rect x="896" y="285" width="4" height="2" fill="#008080"/>
<rect x="902" y="206" width="4" height="2" fill="#008080"/>
<rect x="916" y="206" width="2" height="98" fill="#ff0000"/>
<rect x="912" y="208" width="4" height="2" fill="#ff0000"/>
<rect x="918" y="270" width="4" height="2" fill="#ff0000"/>
<rect x="932" y="224" width="2" height="81" fill="#ff0000"/>
<rect x="928" y="249" width="4" height="2" fill="#ff0000"/>
<rect x="934" y="303" width="4" height="2" fill="#ff0000"/>
<rect x="948" y="289" width="2" height="45" fill="#ff0000"/>
<rect x="944" y="304" width="4" height="2" fill="#ff0000"/>
<rect x="950" y="314" width="4" height="2" fill="#ff0000"/>
<rect x="964" y="289" width="2" height="30" fill="#008080"/>
<rect x="960" y="317" width="4" height="2" fill="#008080"/>
<rect x="966" y="304" width="4" height="2" fill="#008080"/>
<rect x="980" y="276" width="2" height="36" fill="#008080"/>
<rect x="976" y="299" width="4" height="2" fill="#008080"/>
<rect x="982" y="286" width="4" height="2" fill="#008080"/>
<rect x="996" y="278" width="2" height="41" fill="#ff0000"/>
<rect x="992" y="282" width="4" height="2" fill="#ff0000"/>
<rect x="998" y="303" width="4" height="2" fill="#ff0000"/>
<rect x="1012" y="260" width="2" height="47" fill="#008080"/>
<rect x="1008" y="304" width="4" height="2" fill="#008080"/>
<rect x="1014" y="264" width="4" height="2" fill="#008080"/>
<rect x="1028" y="253" width="2" height="15" fill="#008080"/>
<rect x="1024" y="259" width="4" height="2" fill="#008080"/>
<rect x="1030" y="254" width="4" height="2" fill="#008080"/>
</g>
<line x1="822" y1="300.5" x2="951" y2="311.5" stroke="#ff0000" stroke-width="1" class="c" stroke-dasharray="3 3"/>
<g class="c">
<rect x="816" y="299" width="4" height="2" fill="#ff0000"/>
<rect x="818" y="297" width="2" height="6" fill="#ff0000"/>
<polygon points="950,313 953,308 953,313" fill="#daa520"/>
<rect x="818" y="176" width="7" height="1" fill="#ff0000"/>
<rect x="818" y="438" width="7" height="1" fill="#0000ff"/>
</g>
<text x="565.6" y="102.0" font-size="13.5" fill="#000" text-anchor="middle">a</text>
<text x="581.3" y="145.0" font-size="13.5" fill="#000" text-anchor="middle">c</text>
<text x="581.6" y="279.0" font-size="13.5" fill="#000" text-anchor="middle">b</text>
<text x="645.3" y="389.5" font-size="13.5" fill="#000" text-anchor="middle">d</text>
</g>
<polygon class="c" points="1054,74 1063.5,74 1058.7,79.3" fill="#c0c0c0"/>
<polygon class="c" points="8,80 15,80 11.5,84" fill="#000"/>
<rect x="19" y="76" width="196" height="11" fill="#ffffff"/>
<text x="20.0" y="85.0" font-size="9.6" fill="#000" textLength="194.0" lengthAdjust="spacingAndGlyphs">Ger30Sep14,M5  9231.5 9232.5 9230.5 9232.5</text>
<g clip-path="url(#cs)">
<g class="c">
<line x1="5" y1="543.5" x2="1324" y2="543.5" stroke="#c0c0c0" stroke-width="1" stroke-dasharray="3 3"/>
<line x1="5" y1="570.5" x2="1324" y2="570.5" stroke="#c0c0c0" stroke-width="1" stroke-dasharray="3 3"/>
</g>
<polyline points="5.0,530.8 70.0,534.5 125.0,536.0 162.5,540.0 270.0,540.0 300.0,546.0 325.0,554.0 341.0,562.0 357.0,571.2 376.0,580.0 391.0,582.5 421.0,580.0 453.0,576.2 478.5,570.0 501.0,562.5 541.0,548.8 576.0,540.0 603.5,538.0 628.5,538.0 645.0,542.0 682.0,551.0 707.0,554.5 734.5,556.2 779.5,555.5 782.0,554.2 807.0,554.2 822.0,557.5 852.0,563.8 882.0,568.0 892.0,568.0 894.5,567.0 924.5,567.0 927.0,566.2 969.5,566.2 977.0,564.5 999.5,564.5 1014.5,568.0 1029.0,567.0" fill="none" stroke="#20b2aa" stroke-width="1" class="c"/>
<polyline points="5.0,529.5 70.0,533.5 136.0,536.2 172.5,539.5 270.0,539.7 300.0,542.5 325.0,547.0 341.0,552.0 357.0,560.0 383.5,571.2 405.0,578.0 437.0,580.0 469.0,577.0 501.0,570.0 533.0,560.0 565.0,548.8 597.0,541.2 629.0,538.2 661.0,541.2 682.0,545.0 702.0,549.5 732.0,553.8 777.0,555.8 812.0,555.0 852.0,558.8 882.0,565.0 907.0,566.8 957.0,566.2 999.5,565.5 1029.0,565.5" fill="none" stroke="#ff0000" stroke-width="1" class="c" stroke-dasharray="3 3"/>
</g>
<text x="9.0" y="533.5" font-size="9.6" fill="#000" textLength="127.0" lengthAdjust="spacingAndGlyphs">Stoch(21,4,7) 34.2105 36.1939</text>
<g class="c">
<rect x="1325" y="107" width="2" height="1" fill="#000"/>
<rect x="1325" y="140" width="2" height="1" fill="#000"/>
<rect x="1325" y="176" width="2" height="1" fill="#000"/>
<rect x="1325" y="208" width="2" height="1" fill="#000"/>
<rect x="1325" y="242" width="2" height="1" fill="#000"/>
<rect x="1325" y="277" width="2" height="1" fill="#000"/>
<rect x="1325" y="311" width="2" height="1" fill="#000"/>
<rect x="1325" y="347" width="2" height="1" fill="#000"/>
<rect x="1325" y="380" width="2" height="1" fill="#000"/>
<rect x="1325" y="413" width="2" height="1" fill="#000"/>
<rect x="1325" y="449" width="2" height="1" fill="#000"/>
<rect x="1325" y="482" width="2" height="1" fill="#000"/>
<rect x="1325" y="514" width="2" height="1" fill="#000"/>
<rect x="1325" y="591" width="1" height="1" fill="#000"/>
</g>
<text x="1330.0" y="109.8" font-size="9.6" fill="#000" textLength="28.0" lengthAdjust="spacingAndGlyphs">9252.5</text>
<text x="1330.0" y="142.8" font-size="9.6" fill="#000" textLength="28.0" lengthAdjust="spacingAndGlyphs">9248.0</text>
<text x="1330.0" y="178.8" font-size="9.6" fill="#000" textLength="28.0" lengthAdjust="spacingAndGlyphs">9243.0</text>
<text x="1330.0" y="210.8" font-size="9.6" fill="#000" textLength="28.0" lengthAdjust="spacingAndGlyphs">9238.5</text>
<text x="1330.0" y="244.8" font-size="9.6" fill="#000" textLength="28.0" lengthAdjust="spacingAndGlyphs">9234.0</text>
<text x="1330.0" y="279.8" font-size="9.6" fill="#000" textLength="28.0" lengthAdjust="spacingAndGlyphs">9229.0</text>
<text x="1330.0" y="313.8" font-size="9.6" fill="#000" textLength="28.0" lengthAdjust="spacingAndGlyphs">9224.5</text>
<text x="1330.0" y="349.8" font-size="9.6" fill="#000" textLength="28.0" lengthAdjust="spacingAndGlyphs">9219.5</text>
<text x="1330.0" y="382.8" font-size="9.6" fill="#000" textLength="28.0" lengthAdjust="spacingAndGlyphs">9215.0</text>
<text x="1330.0" y="415.8" font-size="9.6" fill="#000" textLength="28.0" lengthAdjust="spacingAndGlyphs">9210.5</text>
<text x="1330.0" y="451.8" font-size="9.6" fill="#000" textLength="28.0" lengthAdjust="spacingAndGlyphs">9205.5</text>
<text x="1330.0" y="484.8" font-size="9.6" fill="#000" textLength="28.0" lengthAdjust="spacingAndGlyphs">9201.0</text>
<text x="1330.0" y="516.8" font-size="9.6" fill="#000" textLength="28.0" lengthAdjust="spacingAndGlyphs">9196.5</text>
<g class="c">
<rect x="1326" y="75" width="36" height="11" fill="#228b22"/>
<rect x="1326" y="300" width="36" height="11" fill="#228b22"/>
<rect x="1326" y="247" width="36" height="11" fill="#000"/>
</g>
<text x="1330.0" y="83.7" font-size="9.6" fill="#fff" textLength="28.0" lengthAdjust="spacingAndGlyphs">9256.1</text>
<text x="1330.0" y="308.7" font-size="9.6" fill="#fff" textLength="28.0" lengthAdjust="spacingAndGlyphs">9225.2</text>
<text x="1330.0" y="255.7" font-size="9.6" fill="#fff" textLength="28.0" lengthAdjust="spacingAndGlyphs">9232.5</text>
<text x="1328.0" y="532.2" font-size="9.6" fill="#000" textLength="15.0" lengthAdjust="spacingAndGlyphs">100</text>
<text x="1328.0" y="546.7" font-size="9.6" fill="#000" textLength="10.0" lengthAdjust="spacingAndGlyphs">70</text>
<text x="1328.0" y="573.2" font-size="9.6" fill="#000" textLength="10.0" lengthAdjust="spacingAndGlyphs">30</text>
<text x="1328.0" y="588.2" font-size="9.6" fill="#000" textLength="5.0" lengthAdjust="spacingAndGlyphs">0</text>
<g class="c">
<rect x="5" y="592" width="1" height="3" fill="#000"/>
<rect x="69" y="592" width="1" height="3" fill="#000"/>
<rect x="133" y="592" width="1" height="3" fill="#000"/>
<rect x="197" y="592" width="1" height="3" fill="#000"/>
<rect x="261" y="592" width="1" height="3" fill="#000"/>
<rect x="325" y="592" width="1" height="3" fill="#000"/>
<rect x="389" y="592" width="1" height="3" fill="#000"/>
<rect x="453" y="592" width="1" height="3" fill="#000"/>
<rect x="517" y="592" width="1" height="3" fill="#000"/>
<rect x="581" y="592" width="1" height="3" fill="#000"/>
<rect x="645" y="592" width="1" height="3" fill="#000"/>
<rect x="709" y="592" width="1" height="3" fill="#000"/>
<rect x="773" y="592" width="1" height="3" fill="#000"/>
<rect x="837" y="592" width="1" height="3" fill="#000"/>
<rect x="901" y="592" width="1" height="3" fill="#000"/>
<rect x="965" y="592" width="1" height="3" fill="#000"/>
<rect x="1029" y="592" width="1" height="3" fill="#000"/>
</g>
<text x="5.0" y="604.0" font-size="9.6" fill="#000" textLength="52.0" lengthAdjust="spacingAndGlyphs">14 Aug 2014</text>
<text x="69.0" y="604.0" font-size="9.6" fill="#000" textLength="55.5" lengthAdjust="spacingAndGlyphs">14 Aug 13:00</text>
<text x="133.0" y="604.0" font-size="9.6" fill="#000" textLength="55.5" lengthAdjust="spacingAndGlyphs">14 Aug 13:20</text>
<text x="197.0" y="604.0" font-size="9.6" fill="#000" textLength="55.5" lengthAdjust="spacingAndGlyphs">14 Aug 13:40</text>
<text x="261.0" y="604.0" font-size="9.6" fill="#000" textLength="55.5" lengthAdjust="spacingAndGlyphs">14 Aug 14:00</text>
<text x="325.0" y="604.0" font-size="9.6" fill="#000" textLength="55.5" lengthAdjust="spacingAndGlyphs">14 Aug 14:20</text>
<text x="389.0" y="604.0" font-size="9.6" fill="#000" textLength="55.5" lengthAdjust="spacingAndGlyphs">14 Aug 14:40</text>
<text x="453.0" y="604.0" font-size="9.6" fill="#000" textLength="55.5" lengthAdjust="spacingAndGlyphs">14 Aug 15:00</text>
<text x="517.0" y="604.0" font-size="9.6" fill="#000" textLength="55.5" lengthAdjust="spacingAndGlyphs">14 Aug 15:20</text>
<text x="581.0" y="604.0" font-size="9.6" fill="#000" textLength="55.5" lengthAdjust="spacingAndGlyphs">14 Aug 15:40</text>
<text x="645.0" y="604.0" font-size="9.6" fill="#000" textLength="55.5" lengthAdjust="spacingAndGlyphs">14 Aug 16:00</text>
<text x="709.0" y="604.0" font-size="9.6" fill="#000" textLength="55.5" lengthAdjust="spacingAndGlyphs">14 Aug 16:20</text>
<text x="773.0" y="604.0" font-size="9.6" fill="#000" textLength="55.5" lengthAdjust="spacingAndGlyphs">14 Aug 16:40</text>
<text x="837.0" y="604.0" font-size="9.6" fill="#000" textLength="55.5" lengthAdjust="spacingAndGlyphs">14 Aug 17:00</text>
<text x="901.0" y="604.0" font-size="9.6" fill="#000" textLength="55.5" lengthAdjust="spacingAndGlyphs">14 Aug 17:20</text>
<text x="965.0" y="604.0" font-size="9.6" fill="#000" textLength="55.5" lengthAdjust="spacingAndGlyphs">14 Aug 17:40</text>
<text x="1029.0" y="604.0" font-size="9.6" fill="#000" textLength="55.5" lengthAdjust="spacingAndGlyphs">14 Aug 18:00</text>
<g class="c">
<rect x="0" y="609" width="1366" height="1" fill="#e4e4e4"/>
<rect x="0" y="610" width="1366" height="1" fill="#ececec"/>
<rect x="0" y="611" width="1366" height="117" fill="#f0f0f0"/>
<rect x="0" y="611" width="2" height="19" fill="#a0a0a0"/>
<rect x="2" y="611" width="2" height="19" fill="#e8e8e8"/>
<rect x="4" y="611" width="100" height="18" fill="#ffffff"/>
<rect x="0" y="611" width="5" height="1" fill="#000"/>
<rect x="4" y="611" width="1" height="19" fill="#000"/>
<rect x="4" y="629" width="100" height="1" fill="#000"/>
<rect x="103" y="611" width="1" height="19" fill="#000"/>
<rect x="103" y="611" width="1263" height="1" fill="#000"/>
<rect x="208" y="614" width="1" height="13" fill="#737380"/>
<rect x="308" y="614" width="1" height="13" fill="#737380"/>
</g>
<text x="14.7" y="623.6" font-size="11.5" fill="#000" textLength="76.7" lengthAdjust="spacingAndGlyphs">Ger30Sep14,M5</text>
<text x="113.7" y="623.6" font-size="11.5" fill="#707070" textLength="82.3" lengthAdjust="spacingAndGlyphs">Ger30Sep14,M15</text>
<text x="218.0" y="623.6" font-size="11.5" fill="#707070" textLength="78.0" lengthAdjust="spacingAndGlyphs">Ger30Sep14,M1</text>
<polygon points="1337,620.5 1341,617 1341,624" fill="#a0a0a0"/><polygon points="1358,620.5 1354,617 1354,624" fill="#a0a0a0"/>
<g class="c">
<rect x="0" y="630" width="1366" height="1" fill="#f8f8f8"/>
<rect x="0" y="631" width="1366" height="1" fill="#ffffff"/>
<rect x="1" y="649" width="13" height="55" fill="#b9c7dc"/>
<rect x="15" y="635" width="1347" height="1" fill="#a0a0a0"/>
<rect x="15" y="635" width="1" height="69" fill="#a0a0a0"/>
<rect x="16" y="636" width="1329" height="22" fill="url(#gh)"/>
<rect x="16" y="658" width="1329" height="1" fill="#e0e0e0"/>
<rect x="16" y="659" width="1329" height="1" fill="#ffffff"/>
<rect x="16" y="660" width="1329" height="20" fill="#3399ff"/>
<rect x="16" y="680" width="1329" height="1" fill="#d2cfc8"/>
<rect x="16" y="681" width="1329" height="2" fill="#c9c7c2"/>
<rect x="1345" y="636" width="1" height="47" fill="#ffffff"/>
<rect x="1363" y="632" width="1" height="72" fill="#ffffff"/>
<rect x="1345" y="636" width="17" height="44" fill="#f4f4f4"/>
<rect x="15" y="683" width="1347" height="1" fill="#000"/>
<rect x="133" y="637" width="1" height="21" fill="#dcdcdc"/>
<rect x="133" y="660" width="1" height="20" fill="#8ec5ff"/>
<rect x="333" y="637" width="1" height="21" fill="#dcdcdc"/>
<rect x="333" y="660" width="1" height="20" fill="#8ec5ff"/>
<rect x="424" y="637" width="1" height="21" fill="#dcdcdc"/>
<rect x="424" y="660" width="1" height="20" fill="#8ec5ff"/>
<rect x="495" y="637" width="1" height="21" fill="#dcdcdc"/>
<rect x="495" y="660" width="1" height="20" fill="#8ec5ff"/>
<rect x="587" y="637" width="1" height="21" fill="#dcdcdc"/>
<rect x="587" y="660" width="1" height="20" fill="#8ec5ff"/>
<rect x="678" y="637" width="1" height="21" fill="#dcdcdc"/>
<rect x="678" y="660" width="1" height="20" fill="#8ec5ff"/>
<rect x="769" y="637" width="1" height="21" fill="#dcdcdc"/>
<rect x="769" y="660" width="1" height="20" fill="#8ec5ff"/>
<rect x="860" y="637" width="1" height="21" fill="#dcdcdc"/>
<rect x="860" y="660" width="1" height="20" fill="#8ec5ff"/>
<rect x="1060" y="637" width="1" height="21" fill="#dcdcdc"/>
<rect x="1060" y="660" width="1" height="20" fill="#8ec5ff"/>
<rect x="1151" y="637" width="1" height="21" fill="#dcdcdc"/>
<rect x="1151" y="660" width="1" height="20" fill="#8ec5ff"/>
<rect x="1241" y="637" width="1" height="21" fill="#dcdcdc"/>
<rect x="1241" y="660" width="1" height="20" fill="#8ec5ff"/>
<rect x="1345" y="636" width="1" height="22" fill="#dcdcdc"/>
</g>
<path d="M4.5 638.5 L9.5 643 M9.5 638.5 L4.5 643" stroke="#000" stroke-width="1.6" fill="none"/>
<text transform="translate(11.5,701) rotate(-90)" font-size="11.5" fill="#4c5d78" textLength="41" lengthAdjust="spacingAndGlyphs">Terminal</text>
<text x="22.0" y="651.6" font-size="11.3" fill="#000" textLength="38.4" lengthAdjust="spacingAndGlyphs" stroke="#000" stroke-width="0.15">Auftrag</text>
<text x="309.0" y="651.6" font-size="11.3" fill="#000" textLength="19.0" lengthAdjust="spacingAndGlyphs" stroke="#000" stroke-width="0.15">Zeit</text>
<text x="402.0" y="651.6" font-size="11.3" fill="#000" textLength="16.0" lengthAdjust="spacingAndGlyphs" stroke="#000" stroke-width="0.15">Typ</text>
<text x="444.7" y="651.6" font-size="11.3" fill="#000" textLength="45.3" lengthAdjust="spacingAndGlyphs" stroke="#000" stroke-width="0.15">Volumen</text>
<text x="545.6" y="651.6" font-size="11.3" fill="#000" textLength="36.0" lengthAdjust="spacingAndGlyphs" stroke="#000" stroke-width="0.15">Symbol</text>
<text x="649.0" y="651.6" font-size="11.3" fill="#000" textLength="23.0" lengthAdjust="spacingAndGlyphs" stroke="#000" stroke-width="0.15">Preis</text>
<text x="743.8" y="651.6" font-size="11.3" fill="#000" textLength="21.0" lengthAdjust="spacingAndGlyphs" stroke="#000" stroke-width="0.15">S / L</text>
<text x="834.0" y="651.6" font-size="11.3" fill="#000" textLength="20.7" lengthAdjust="spacingAndGlyphs" stroke="#000" stroke-width="0.15">T / P</text>
<text x="1036.0" y="651.6" font-size="11.3" fill="#000" textLength="18.0" lengthAdjust="spacingAndGlyphs" stroke="#000" stroke-width="0.15">Zeit</text>
<text x="1122.6" y="651.6" font-size="11.3" fill="#000" textLength="22.7" lengthAdjust="spacingAndGlyphs" stroke="#000" stroke-width="0.15">Preis</text>
<text x="1209.4" y="651.6" font-size="11.3" fill="#000" textLength="27.0" lengthAdjust="spacingAndGlyphs" stroke="#000" stroke-width="0.15">Swap</text>
<text x="1299.5" y="651.6" font-size="11.3" fill="#000" textLength="38.5" lengthAdjust="spacingAndGlyphs" stroke="#000" stroke-width="0.15">Gewinn</text>
<path d="M74.5 654 L77.5 647.5 L80.5 654 Z" fill="#fff" stroke="#c8c8c8" stroke-width="0.8"/>
<text x="38.2" y="673.6" font-size="11.3" fill="#fff" textLength="53.2" lengthAdjust="spacingAndGlyphs">406032539</text>
<text x="231.5" y="673.6" font-size="11.3" fill="#fff" textLength="98.3" lengthAdjust="spacingAndGlyphs">2014.08.14 16:58:10</text>
<text x="404.7" y="673.6" font-size="11.3" fill="#fff" textLength="15.7" lengthAdjust="spacingAndGlyphs">sell</text>
<text x="471.6" y="673.6" font-size="11.3" fill="#fff" textLength="20.0" lengthAdjust="spacingAndGlyphs">0.60</text>
<text x="526.0" y="673.6" font-size="11.3" fill="#fff" textLength="57.0" lengthAdjust="spacingAndGlyphs">ger30sep14</text>
<text x="641.5" y="673.6" font-size="11.3" fill="#fff" textLength="32.5" lengthAdjust="spacingAndGlyphs">9226.0</text>
<text x="732.5" y="673.6" font-size="11.3" fill="#fff" textLength="32.3" lengthAdjust="spacingAndGlyphs">9243.0</text>
<text x="823.7" y="673.6" font-size="11.3" fill="#fff" textLength="32.0" lengthAdjust="spacingAndGlyphs">9207.0</text>
<text x="959.0" y="673.6" font-size="11.3" fill="#fff" textLength="97.9" lengthAdjust="spacingAndGlyphs">2014.08.14 17:36:12</text>
<text x="1114.6" y="673.6" font-size="11.3" fill="#fff" textLength="32.4" lengthAdjust="spacingAndGlyphs">9224.5</text>
<text x="1217.0" y="673.6" font-size="11.3" fill="#fff" textLength="21.0" lengthAdjust="spacingAndGlyphs">0.00</text>
<text x="1314.5" y="673.6" font-size="11.3" fill="#fff" textLength="25.5" lengthAdjust="spacingAndGlyphs">22.50</text>
<path d="M20.5 663.5 H28 L31.5 667 V677.5 H20.5 Z" fill="#fff" stroke="#606060" stroke-width="1"/><path d="M28 663.5 V667 H31.5" fill="#e0e0e0" stroke="#606060" stroke-width="0.8"/><circle cx="29.5" cy="675" r="3.2" fill="#e8401c" stroke="#b02808" stroke-width="0.6"/>
<polygon points="1350,647 1353.500,643 1357,647" fill="#404040"/><polygon points="1350,672 1353.500,676 1357,672" fill="#404040"/>
<g class="c">
<rect x="75" y="683" width="85" height="17" fill="#ffffff"/>
<rect x="74" y="683" width="1" height="18" fill="#000"/>
<rect x="74" y="700" width="87" height="1" fill="#000"/>
<rect x="160" y="683" width="1" height="18" fill="#000"/>
<rect x="238" y="687" width="1" height="12" fill="#737380"/>
<rect x="291" y="687" width="1" height="12" fill="#737380"/>
<rect x="347" y="687" width="1" height="12" fill="#737380"/>
<rect x="395" y="687" width="1" height="12" fill="#737380"/>
<rect x="455" y="687" width="1" height="12" fill="#737380"/>
<rect x="520" y="687" width="1" height="12" fill="#737380"/>
<rect x="584" y="687" width="1" height="12" fill="#737380"/>
<rect x="639" y="687" width="1" height="12" fill="#737380"/>
</g>
<text x="28.2" y="695.7" font-size="11.5" fill="#707070" textLength="34.7" lengthAdjust="spacingAndGlyphs">Trading</text>
<text x="83.5" y="695.7" font-size="11.5" fill="#000" textLength="66.2" lengthAdjust="spacingAndGlyphs">Konto Historie</text>
<text x="170.5" y="695.7" font-size="11.5" fill="#737380" textLength="57.0" lengthAdjust="spacingAndGlyphs">Nachrichten</text>
<text x="248.0" y="695.7" font-size="11.5" fill="#737380" textLength="32.0" lengthAdjust="spacingAndGlyphs">Alarme</text>
<text x="300.5" y="695.7" font-size="11.5" fill="#737380" textLength="35.3" lengthAdjust="spacingAndGlyphs">Mailbox</text>
<text x="356.4" y="695.7" font-size="11.5" fill="#737380" textLength="26.6" lengthAdjust="spacingAndGlyphs">Markt</text>
<text x="403.7" y="695.7" font-size="11.5" fill="#737380" textLength="32.7" lengthAdjust="spacingAndGlyphs">Signale</text>
<text x="464.0" y="695.7" font-size="11.5" fill="#737380" textLength="45.0" lengthAdjust="spacingAndGlyphs">Bibliothek</text>
<text x="529.0" y="695.7" font-size="11.5" fill="#737380" textLength="44.0" lengthAdjust="spacingAndGlyphs">Experten</text>
<text x="594.0" y="695.7" font-size="11.5" fill="#737380" textLength="34.0" lengthAdjust="spacingAndGlyphs">Journal</text>
<text x="439.7" y="697.0" font-size="8" fill="#e00000" font-weight="bold">9</text>
<g class="c">
<rect x="0" y="703" width="1366" height="2" fill="#ffffff"/>
<rect x="0" y="705" width="1366" height="1" fill="#dcdcdc"/>
<rect x="0" y="706" width="1366" height="1" fill="#a0a0a0"/>
<rect x="0" y="707" width="1366" height="1" fill="#ffffff"/>
<rect x="640" y="710" width="1" height="16" fill="#a0a0a0"/>
<rect x="756" y="710" width="1" height="16" fill="#a0a0a0"/>
<rect x="858" y="710" width="1" height="16" fill="#a0a0a0"/>
<rect x="929" y="710" width="1" height="16" fill="#a0a0a0"/>
<rect x="1000" y="710" width="1" height="16" fill="#a0a0a0"/>
<rect x="1068" y="710" width="1" height="16" fill="#a0a0a0"/>
<rect x="1138" y="710" width="1" height="16" fill="#a0a0a0"/>
<rect x="1204" y="710" width="1" height="16" fill="#a0a0a0"/>
<rect x="1210" y="713" width="2" height="9" fill="#6b8a12"/>
<rect x="1210" y="722" width="2" height="2" fill="#0c2f50"/>
<rect x="1213" y="713" width="2" height="8" fill="#6b8a12"/>
<rect x="1213" y="721" width="2" height="3" fill="#0c2f50"/>
<rect x="1216" y="713" width="2" height="7" fill="#6b8a12"/>
<rect x="1216" y="720" width="2" height="4" fill="#0c2f50"/>
<rect x="1219" y="713" width="2" height="6" fill="#6b8a12"/>
<rect x="1219" y="719" width="2" height="5" fill="#0c2f50"/>
<rect x="1222" y="713" width="2" height="5" fill="#6b8a12"/>
<rect x="1222" y="718" width="2" height="6" fill="#0c2f50"/>
<rect x="1225" y="713" width="2" height="4" fill="#6b8a12"/>
<rect x="1225" y="717" width="2" height="7" fill="#0c2f50"/>
<rect x="1228" y="713" width="2" height="3" fill="#6b8a12"/>
<rect x="1228" y="716" width="2" height="8" fill="#0c2f50"/>
<rect x="1231" y="713" width="2" height="2" fill="#6b8a12"/>
<rect x="1231" y="715" width="2" height="9" fill="#0c2f50"/>
</g>
<text x="2.5" y="722.8" font-size="11.3" fill="#000" textLength="103.1" lengthAdjust="spacingAndGlyphs">Für Hilfe F1 drücken</text>
<text x="646.5" y="722.8" font-size="11.3" fill="#000" textLength="37.0" lengthAdjust="spacingAndGlyphs">Default</text>
<text x="762.0" y="722.8" font-size="11.3" fill="#000" textLength="82.7" lengthAdjust="spacingAndGlyphs">2014.08.14 14:55</text>
<text x="864.7" y="722.8" font-size="11.3" fill="#000" textLength="52.0" lengthAdjust="spacingAndGlyphs">O: 9210.5</text>
<text x="935.0" y="722.8" font-size="11.3" fill="#000" textLength="46.0" lengthAdjust="spacingAndGlyphs">H: 9216.5</text>
<text x="1006.0" y="722.8" font-size="11.3" fill="#000" textLength="43.5" lengthAdjust="spacingAndGlyphs">L: 9209.5</text>
<text x="1074.0" y="722.8" font-size="11.3" fill="#000" textLength="45.6" lengthAdjust="spacingAndGlyphs">C: 9215.5</text>
<text x="1143.6" y="722.8" font-size="11.3" fill="#000" textLength="30.1" lengthAdjust="spacingAndGlyphs">V: 204</text>
<text x="1274.5" y="722.8" font-size="11.3" fill="#000" textLength="49.4" lengthAdjust="spacingAndGlyphs">4805/8 kb</text>
</svg>
</body></html>
